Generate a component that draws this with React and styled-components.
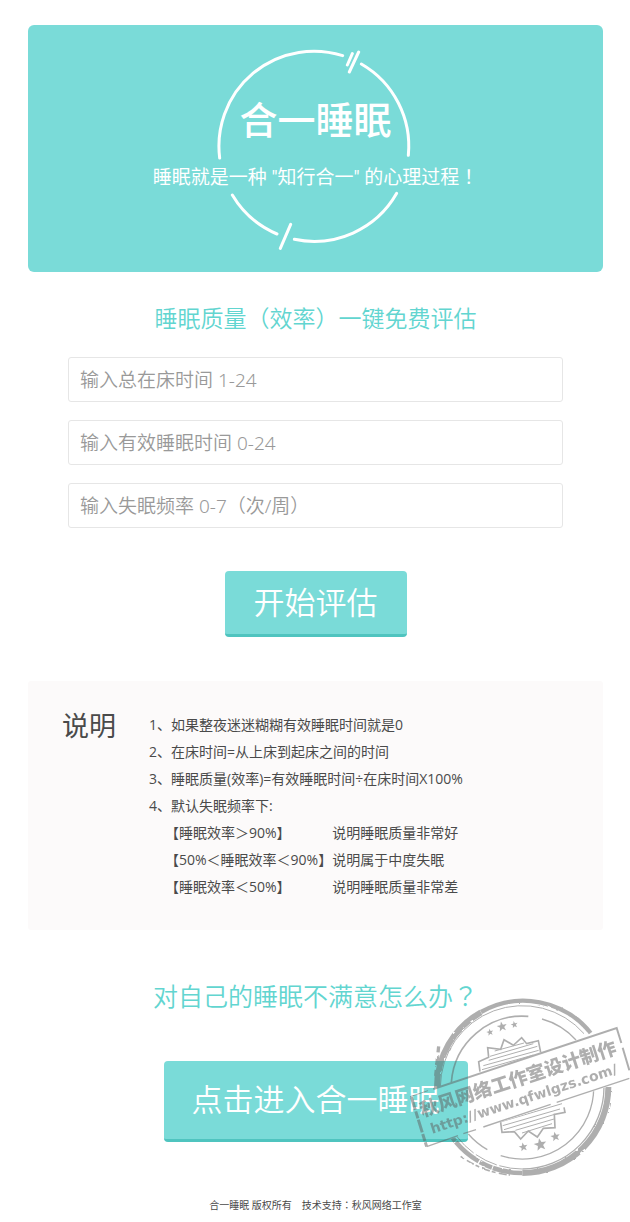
import React, { useState } from "react";
import styled, { createGlobalStyle } from "styled-components";

const fields = [
  { id: "bed", label: "输入总在床时间 1-24" },
  { id: "sleep", label: "输入有效睡眠时间 0-24" },
  { id: "rate", label: "输入失眠频率 0-7（次/周）" },
];

const notes = [
  "1、如果整夜迷迷糊糊有效睡眠时间就是0",
  "2、在床时间=从上床到起床之间的时间",
  "3、睡眠质量(效率)=有效睡眠时间÷在床时间X100%",
  "4、默认失眠频率下:",
];

const levels = [
  ["【睡眠效率＞90%】", "说明睡眠质量非常好"],
  ["【50%＜睡眠效率＜90%】", "说明属于中度失眠"],
  ["【睡眠效率＜50%】", "说明睡眠质量非常差"],
];

// x, y, radius
const stars = [
  [270, 190, 11],
  [306, 173, 16],
  [343, 167, 11],
  [370, 534, 14],
  [421, 527, 20],
  [466, 503, 15],
];

const starPoints = (cx, cy, r) =>
  Array.from({ length: 10 }, (_, i) => {
    const a = (Math.PI / 5) * i - Math.PI / 2 - 0.2;
    const d = i % 2 ? r * 0.42 : r;
    return `${cx + d * Math.cos(a)},${cy + d * Math.sin(a)}`;
  }).join(" ");

function Ring() {
  return (
    <RingSvg viewBox="222 48 600 612" aria-hidden="true">
      <path d="M239 384A285 285 0 0 1 608 77" />
      <path d="M664 102A285 285 0 0 1 805 376" />
      <path d="M770 490A285 285 0 0 1 463 628" />
      <path d="M411 612A285 285 0 0 1 277 495" />
      <path d="M622 105L637 71M628 126L656 66M452 583L421 655" />
    </RingSvg>
  );
}

function Stamp() {
  return (
    <StampSvg viewBox="0 0 690 660" aria-hidden="true">
      <defs>
        <filter id="rough" x="-5%" y="-5%" width="110%" height="110%">
          <feTurbulence type="fractalNoise" baseFrequency="0.05" numOctaves="3" seed="4" />
          <feDisplacementMap in="SourceGraphic" scale="7" />
        </filter>
        <mask id="outside">
          <rect width="690" height="660" fill="#fff" />
          <path d="M30 383L650 177L700 327L80 533Z" fill="#000" />
        </mask>
      </defs>
      <g opacity="0.5" fill="none" stroke="#606060">
        <g mask="url(#outside)">
          <g filter="url(#rough)">
            <path strokeWidth="18" d="M111 358A258 258 0 0 1 243 130" />
            <path strokeWidth="13" d="M243 129A258 258 0 0 1 572 192" />
            <path strokeWidth="18" d="M625 354A258 258 0 0 1 367 612" />
            <path strokeWidth="14" strokeDasharray="90 3 40 4" d="M367 612A258 258 0 0 1 156 504" />
            <path strokeWidth="10" strokeDasharray="18 9 30 14" d="M116 232L106 330" />
            <path strokeWidth="5" strokeDasharray="12 10 24 6" d="M182 562Q250 610 330 618" />
          </g>
          <path strokeWidth="3" d="M121 354A246 246 0 0 1 552 194" />
          <path strokeWidth="4" d="M612 354A246 246 0 0 1 367 600" />
          <path strokeWidth="3" strokeDasharray="70 8" d="M367 600A246 246 0 0 1 166 496" />
          <path strokeWidth="5" d="M154 340A214 214 0 0 1 385 142" />
          <path strokeWidth="4" d="M426 150A214 214 0 0 1 528 213" />
          <path strokeWidth="4" d="M581 348A214 214 0 0 1 302 560" />
          <path strokeWidth="4" d="M262 542A214 214 0 0 1 205 495" />
          <path
            strokeWidth="5"
            d="M240 308L236 278L266 265L263 236L302 241L312 212L340 229L365 206L380 224L415 215L422 250"
          />
          <path
            strokeWidth="5"
            d="M300 446L306 490L343 488L362 510L385 486L412 504L430 478L465 476L463 436L495 430L492 415"
          />
          <path
            strokeWidth="3"
            d="M270 262L400 224M284 246L372 222M266 274L412 232M250 290L416 244M246 302L400 258M258 310L372 276"
          />
          <path
            strokeWidth="3"
            d="M304 458L486 404M308 470L480 420M312 482L464 436M346 484L462 450M366 492L456 464"
          />
        </g>
        <g fill="#606060" stroke="none">
          {stars.map(([x, y, r]) => (
            <polygon key={x} points={starPoints(x, y, r)} />
          ))}
        </g>
        <path strokeWidth="6" d="M100 360L650 177L664 222M668 236L688 304" />
        <path strokeWidth="4" d="M688 328L470 400M452 406L250 474M228 482L190 494M174 500L80 533" />
        <path strokeWidth="9" strokeDasharray="40 5 22 4" d="M34 384L80 533" />
        <path strokeWidth="3" d="M30 383L84 365" />
        <g fill="#606060" stroke="none" transform="rotate(-18 70 445)">
          <StampText x="68" y="443" size={56}>
            秋风网络工作室设计制作
          </StampText>
          <StampText x="80" y="500" size={42} $latin>
            http://www.qfwlgzs.com/
          </StampText>
        </g>
      </g>
    </StampSvg>
  );
}

function App() {
  const [values, setValues] = useState({ bed: "", sleep: "", rate: "" });

  return (
    <Page>
      <GlobalStyle />
      <Hero>
        <Ring />
        <Brand>合一睡眠</Brand>
        <Slogan>
          睡眠就是一种 "知行合一" 的心理过程<Mark>！</Mark>
        </Slogan>
      </Hero>

      <Assess>
        <Heading size={23}>睡眠质量（效率）一键免费评估</Heading>
        <Form onSubmit={(e) => e.preventDefault()}>
          {fields.map((field) => (
            <Field
              key={field.id}
              type="text"
              aria-label={field.label}
              placeholder={field.label}
              value={values[field.id]}
              onChange={(e) => setValues({ ...values, [field.id]: e.target.value })}
            />
          ))}
          <Submit type="submit">开始评估</Submit>
        </Form>
      </Assess>

      <Notes>
        <NotesTitle>说明</NotesTitle>
        <div>
          <NoteList>
            {notes.map((note) => (
              <li key={note}>{note}</li>
            ))}
          </NoteList>
          <Levels>
            {levels.map(([range, text]) => (
              <React.Fragment key={range}>
                <dt>{range}</dt>
                <dd>{text}</dd>
              </React.Fragment>
            ))}
          </Levels>
        </div>
      </Notes>

      <More>
        <Heading size={25}>
          对自己的睡眠不满意怎么办<Mark>？</Mark>
        </Heading>
        <Enter href="#">点击进入合一睡眠</Enter>
        <Stamp />
      </More>

      <Footer>
        合一睡眠 版权所有　技术支持<Mark>：</Mark>秋风网络工作室
      </Footer>
    </Page>
  );
}

const GlobalStyle = createGlobalStyle`
  * {
    box-sizing: border-box;
  }
  body {
    margin: 0;
    background: #fff;
    color: #4a4a4a;
    font-family: "Open Sans", "Noto Sans CJK SC", sans-serif;
  }
  h1, h2, h3, p, ol, dl, dd {
    margin: 0;
    padding: 0;
  }
`;

const Page = styled.main`
  padding: 25px 27px 0 28px;
  overflow: hidden;
`;

const Hero = styled.header`
  position: relative;
  display: flex;
  flex-direction: column;
  align-items: center;
  gap: 18px;
  padding: 69px 0 80px;
  border-radius: 6px;
  background: #7adbd8;
  color: #fff;
`;

const RingSvg = styled.svg`
  position: absolute;
  top: 21px;
  left: calc(50% - 102px);
  width: 200px;
  height: 204px;
  fill: none;
  stroke: #fff;
  stroke-width: 9;
  stroke-linecap: round;
`;

const Brand = styled.h1`
  font-size: 38px;
  line-height: 50px;
  font-weight: 500;
`;

const Slogan = styled.p`
  font-family: Roboto, "Noto Sans CJK SC", sans-serif;
  font-size: 19px;
  line-height: 28px;
`;

/* full-width punctuation that sits in the middle of its cell */
const Mark = styled.span`
  font-family: "Noto Sans CJK TC", sans-serif;
`;

const Assess = styled.section`
  padding-top: 29px;
`;

const Heading = styled.h2`
  font-size: ${(props) => props.size}px;
  line-height: 34px;
  font-weight: 350;
  text-align: center;
  color: #62d5d0;
`;

const Form = styled.form`
  display: flex;
  flex-direction: column;
  align-items: center;
  gap: 18px;
  padding: 22px 40px 44px;
`;

const Field = styled.input`
  width: 100%;
  height: 45px;
  padding: 0 11px;
  border: 1px solid #e6e6e6;
  border-radius: 3px;
  background: #fff;
  color: #4a4a4a;
  font-family: "Noto Sans", "Noto Sans CJK SC", sans-serif;
  font-size: 19px;
  font-weight: 350;
  outline: none;
  &::placeholder {
    color: #999;
    opacity: 1;
  }
`;

const Submit = styled.button`
  margin-top: 25px;
  padding: 9px 29px;
  border: 0;
  border-bottom: 3px solid #4fc4bf;
  border-radius: 4px;
  background: #7adbd8;
  color: #fff;
  font-family: inherit;
  font-size: 31px;
  line-height: 45px;
  font-weight: 350;
  cursor: pointer;
`;

const Notes = styled.section`
  display: flex;
  padding: 30px 34px;
  border-radius: 3px;
  background: #fcfafa;
`;

const NotesTitle = styled.h3`
  flex: none;
  width: 87px;
  font-size: 27px;
  line-height: 30px;
  font-weight: 400;
`;

const NoteList = styled.ol`
  list-style: none;
  font-size: 14px;
  line-height: 27px;
`;

const Levels = styled.dl`
  display: grid;
  grid-template-columns: max-content 1fr;
  padding-left: 16px;
  font-size: 14px;
  line-height: 27px;
`;

const More = styled.section`
  position: relative;
  display: flex;
  flex-direction: column;
  align-items: center;
  gap: 48px;
  padding-top: 48px;
`;

const Enter = styled.a`
  padding: 16px 28px 17px;
  border-bottom: 3px solid #4fc4bf;
  border-radius: 4px;
  background: #7adbd8;
  color: #fff;
  font-size: 31px;
  line-height: 45px;
  font-weight: 350;
  text-decoration: none;
`;

const StampSvg = styled.svg`
  position: absolute;
  top: 39px;
  right: -27px;
  width: 230px;
  height: 220px;
  pointer-events: none;
`;

const StampText = styled.text`
  font-family: ${(props) => (props.$latin ? '"DejaVu Sans"' : '"Noto Sans CJK SC"')}, sans-serif;
  font-size: ${(props) => props.size}px;
  font-weight: ${(props) => (props.$latin ? 700 : 900)};
`;

const Footer = styled.footer`
  padding: 55px 0 10px;
  font-size: 10px;
  line-height: 16px;
  text-align: center;
`;

export default App;
